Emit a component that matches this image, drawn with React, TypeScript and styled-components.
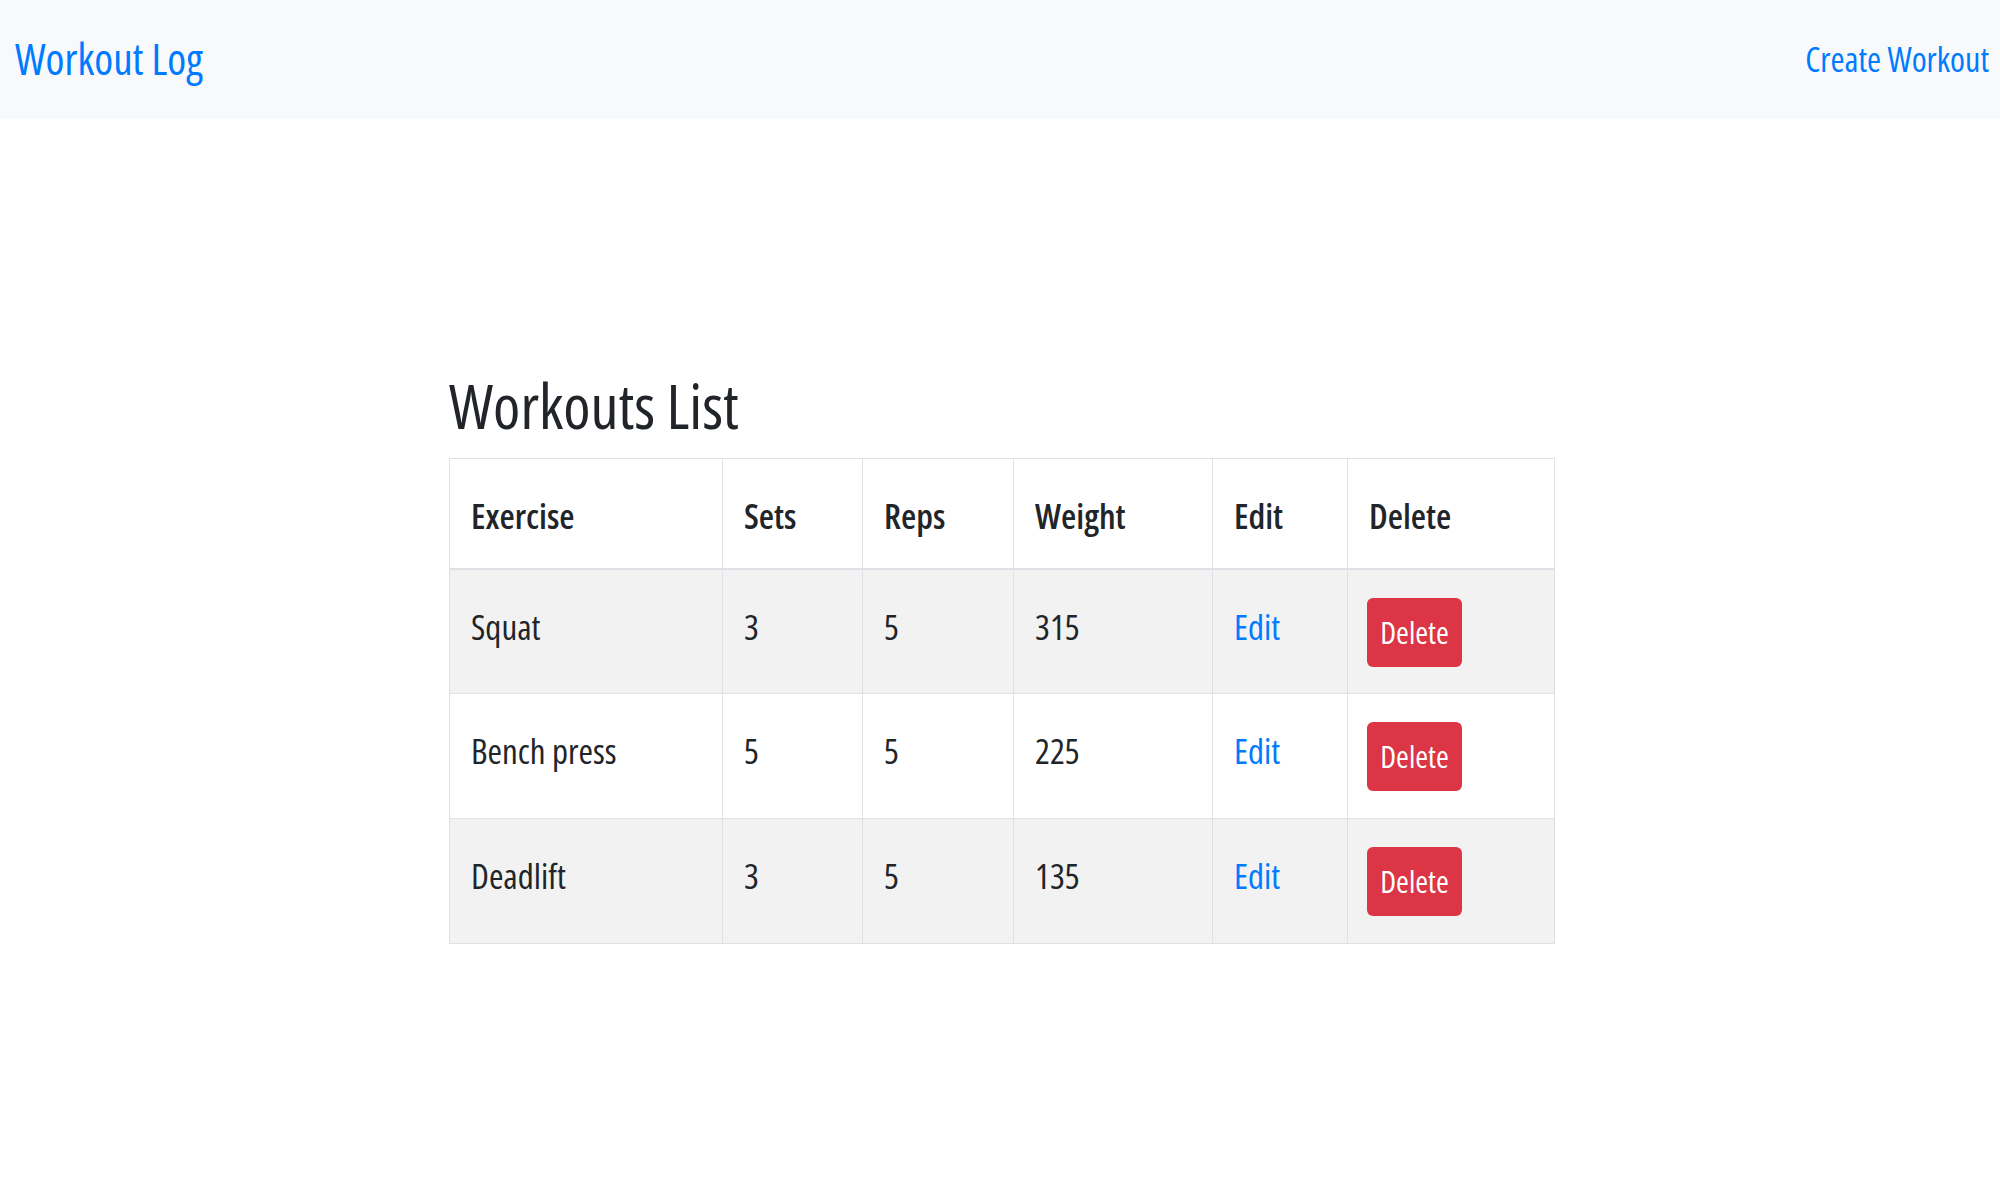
import React from "react";
import styled, { createGlobalStyle } from "styled-components";

const GlobalStyle = createGlobalStyle`
  html, body { margin: 0; padding: 0; background: #ffffff; }
  body {
    font-family: "Open Sans", "Noto Sans", sans-serif;
    font-stretch: 75%;
    color: #212529;
    font-size: 35px;
    line-height: 1.5;
  }
  * { box-sizing: border-box; }
`;

const Navbar = styled.nav`
  height: 119px;
  background: #f8f9fa;
  display: flex;
  align-items: center;
  justify-content: space-between;
  padding: 0 11px 0 15px;
`;

const Brand = styled.a`
  font-size: 43px;
  line-height: 1.5;
  color: #007bff;
  text-decoration: none;
  font-weight: 380;
`;

const NavLink = styled.a`
  font-size: 34px;
  line-height: 1.5;
  color: #007bff;
  text-decoration: none;
  font-weight: 380;
`;

const Main = styled.main`
  padding: 249px 0 0 449px;
`;

const Title = styled.h3`
  margin: 0 0 16px 0;
  font-size: 62px;
  font-weight: 500;
  line-height: 1.2;
`;

const Table = styled.table`
  width: 1105px;
  border-collapse: collapse;
  border: 1px solid #dee2e6;
  table-layout: fixed;
`;

const HeadCell = styled.th<{ $w: number }>`
  width: ${(p) => p.$w}px;
  height: 110px;
  text-align: left;
  vertical-align: middle;
  padding: 12px 21px 6px;
  font-weight: 620;
  font-size: 35px;
  border: 1px solid #dee2e6;
  border-bottom: 2px solid #dee2e6;
`;

const BodyRow = styled.tr<{ $striped: boolean }>`
  height: 125px;
  background: ${(p) => (p.$striped ? "#f2f2f2" : "#ffffff")};
`;

const Cell = styled.td<{ $tight?: boolean }>`
  padding: 28px ${(p) => (p.$tight ? "19px" : "21px")} 0;
  vertical-align: top;
  border: 1px solid #dee2e6;
  font-size: 35px;
  font-weight: 370;
  line-height: 57px;
`;

const EditLink = styled.a`
  color: #007bff;
  text-decoration: none;
`;

const DeleteButton = styled.button`
  display: flex;
  align-items: center;
  justify-content: center;
  width: 95px;
  height: 69px;
  padding: 0;
  border: none;
  border-radius: 6px;
  background: #dc3545;
  color: #ffffff;
  font-family: inherit;
  font-stretch: 75%;
  font-size: 31px;
  font-weight: 380;
  line-height: 1;
  cursor: pointer;
`;

const columns: [string, number][] = [
  ["Exercise", 273],
  ["Sets", 140],
  ["Reps", 151],
  ["Weight", 199],
  ["Edit", 135],
  ["Delete", 207],
];

const workouts = [
  { exercise: "Squat", sets: 3, reps: 5, weight: 315 },
  { exercise: "Bench press", sets: 5, reps: 5, weight: 225 },
  { exercise: "Deadlift", sets: 3, reps: 5, weight: 135 },
];

export default function App() {
  return (
    <>
      <GlobalStyle />
      <Navbar>
        <Brand href="#">Workout Log</Brand>
        <NavLink href="#">Create Workout</NavLink>
      </Navbar>
      <Main>
        <Title>Workouts List</Title>
        <Table>
          <thead>
            <tr>
              {columns.map(([c, w]) => (
                <HeadCell key={c} $w={w}>
                  {c}
                </HeadCell>
              ))}
            </tr>
          </thead>
          <tbody>
            {workouts.map((w, i) => (
              <BodyRow key={w.exercise} $striped={i % 2 === 0}>
                <Cell>{w.exercise}</Cell>
                <Cell>{w.sets}</Cell>
                <Cell>{w.reps}</Cell>
                <Cell>{w.weight}</Cell>
                <Cell>
                  <EditLink href="#">Edit</EditLink>
                </Cell>
                <Cell $tight>
                  <DeleteButton>Delete</DeleteButton>
                </Cell>
              </BodyRow>
            ))}
          </tbody>
        </Table>
      </Main>
    </>
  );
}
